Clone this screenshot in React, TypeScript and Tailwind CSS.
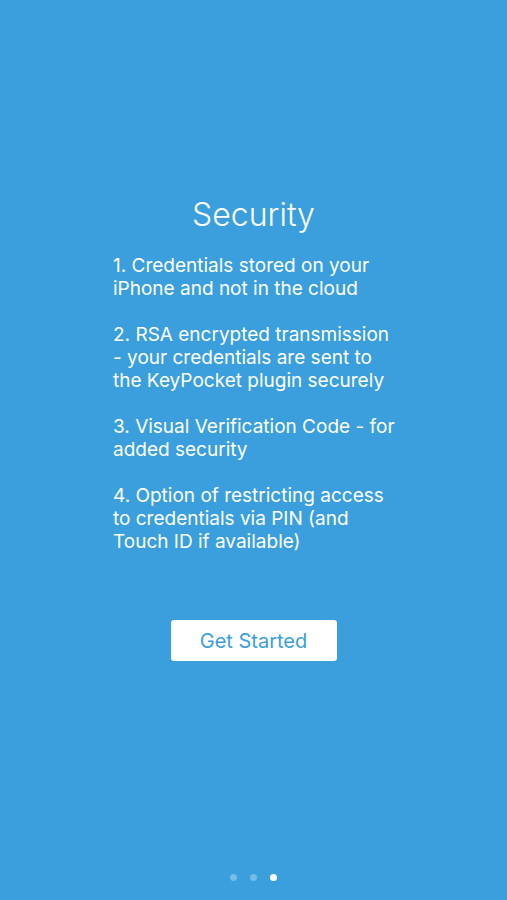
const lines: string[][] = [
  ["1. Credentials stored on your", "iPhone and not in the cloud"],
  [
    "2. RSA encrypted transmission",
    "- your credentials are sent to",
    "the KeyPocket plugin securely",
  ],
  ["3. Visual Verification Code - for", "added security"],
  [
    "4. Option of restricting access",
    "to credentials via PIN (and",
    "Touch ID if available)",
  ],
];

export default function App() {
  return (
    <div
      className="w-[507px] h-[900px] bg-[#3a9fdc] flex flex-col items-center text-white"
      style={{ fontFamily: "Inter, Roboto, 'Liberation Sans', sans-serif" }}
    >
      <h1 className="mt-[196px] h-[38px] text-[32px] leading-[38px] font-light">
        Security
      </h1>
      <div className="mt-[20px] w-[281px] flex flex-col gap-[23px] text-[19px] leading-[23px] font-normal">
        {lines.map((para, i) => (
          <p key={i} className="whitespace-nowrap">
            {para.map((l, j) => (
              <span key={j} className="block">
                {l}
              </span>
            ))}
          </p>
        ))}
      </div>
      <button className="mt-[67px] w-[166px] h-[41px] bg-white rounded-[3px] text-[#3a9fdc] text-[20px] font-normal">
        Get Started
      </button>
      <div className="mt-auto mb-[19px] flex gap-[13px]">
        <span className="w-[7px] h-[7px] rounded-full bg-white/30" />
        <span className="w-[7px] h-[7px] rounded-full bg-white/30" />
        <span className="w-[7px] h-[7px] rounded-full bg-white" />
      </div>
    </div>
  );
}
